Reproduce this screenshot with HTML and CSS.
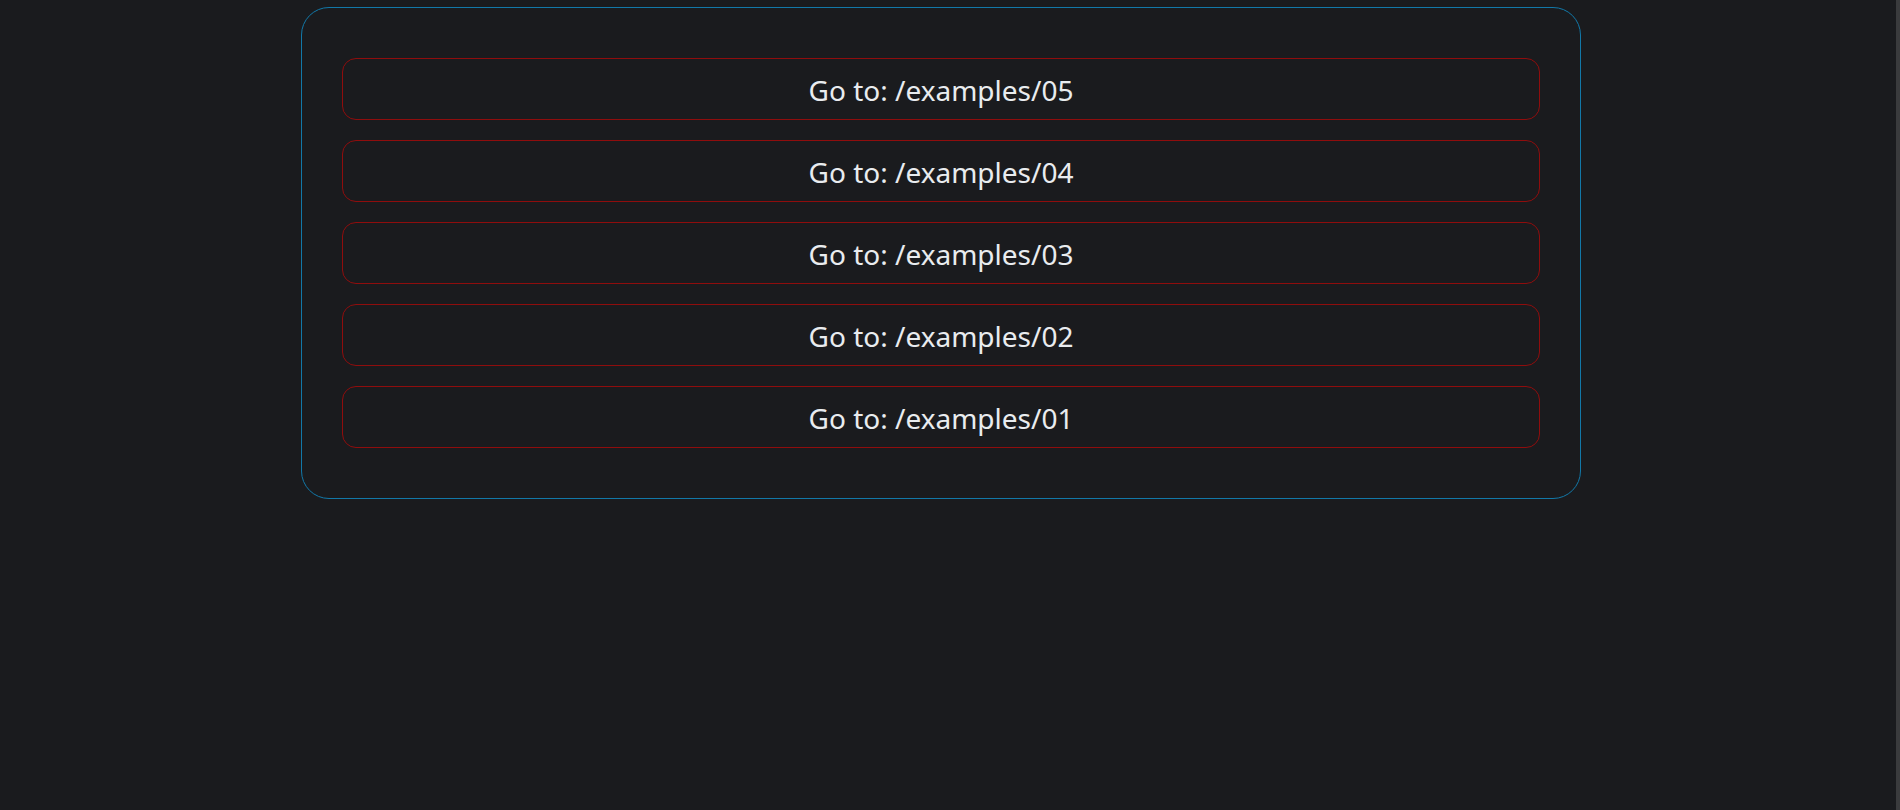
FILE: index.html
```html
<!DOCTYPE html>
<html lang="en">
<head>
<meta charset="utf-8">
<title>Examples</title>
<link rel="stylesheet" href="styles.css">
</head>
<body>
<div class="page">
  <main class="content">
    <div class="card">
      <a class="link-btn" href="#">Go to: /examples/05</a>
      <a class="link-btn" href="#">Go to: /examples/04</a>
      <a class="link-btn" href="#">Go to: /examples/03</a>
      <a class="link-btn" href="#">Go to: /examples/02</a>
      <a class="link-btn" href="#">Go to: /examples/01</a>
    </div>
  </main>
  <div class="scrollbar"></div>
</div>
</body>
</html>
```
FILE: styles.css
```css
html, body {
  margin: 0;
  padding: 0;
  height: 100%;
  background: #1a1b1e;
}
body {
  font-family: "Noto Sans", "Open Sans", sans-serif;
  color: #e9ecef;
}
.page {
  display: flex;
  height: 100%;
}
.content {
  flex: 1;
  padding: 7px 0 0 301px;
}
.scrollbar {
  width: 4px;
  background: #3a3b3d;
}
.card {
  box-sizing: border-box;
  width: 1280px;
  border: 1px solid #1278a8;
  border-radius: 28px;
  padding: 50px 40px;
  display: flex;
  flex-direction: column;
  gap: 20px;
}
.link-btn {
  box-sizing: border-box;
  height: 62px;
  border: 1px solid #8f0d0d;
  border-radius: 14px;
  display: flex;
  align-items: center;
  justify-content: center;
  color: #e9ecef;
  text-decoration: none;
  font-size: 28px;
  padding-top: 1px;
}
```
